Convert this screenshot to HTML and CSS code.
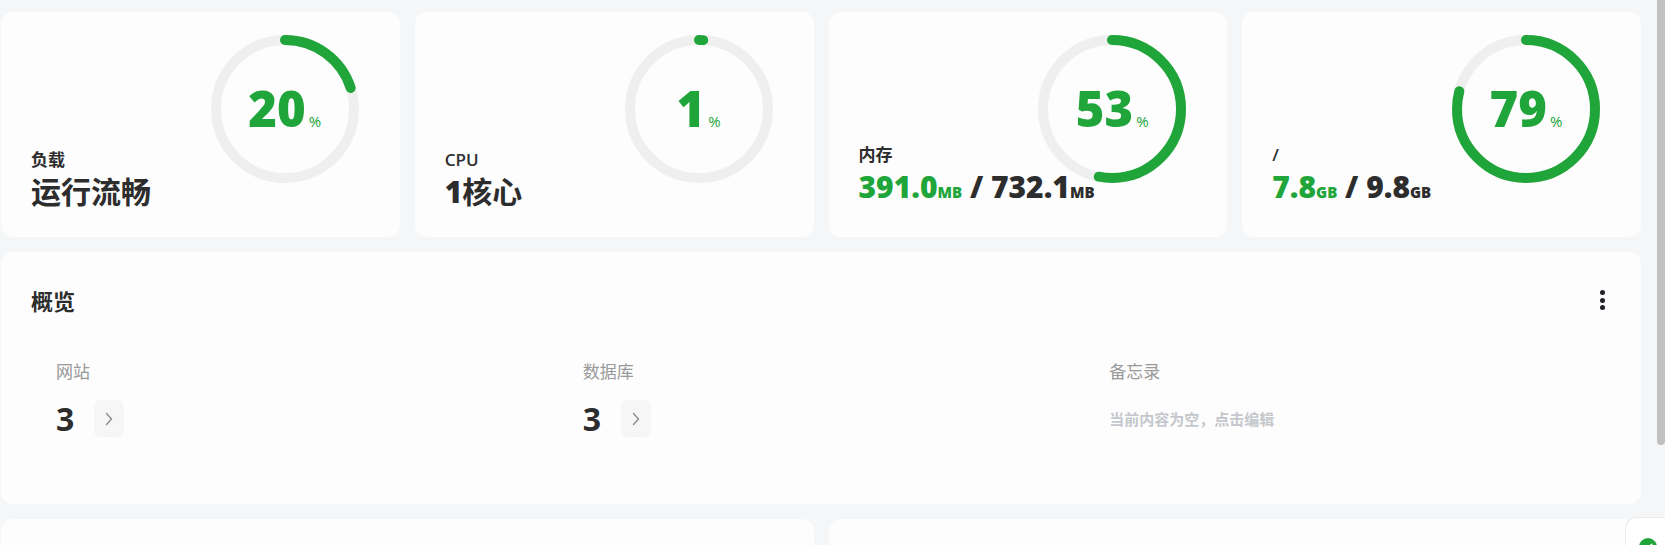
FILE: index.html
```html
<!DOCTYPE html>
<html lang="zh-CN">
<head>
<meta charset="utf-8">
<title>首页</title>
<link rel="stylesheet" href="styles.css">
</head>
<body>
<main class="page">
  <section class="stats">
    <div class="card stat-card">
      <div class="ring">
        <svg viewBox="0 0 148 148"><circle class="track" cx="74" cy="74" r="69"/><circle class="bar" cx="74" cy="74" r="69" stroke-dasharray="86.7 433.6"/></svg>
        <div class="ring-value"><span class="ring-num">20</span><span class="ring-unit">%</span></div>
      </div>
      <div class="stat-info">
        <div class="stat-label">负载</div>
        <div class="stat-value">运行流畅</div>
      </div>
    </div>
    <div class="card stat-card">
      <div class="ring">
        <svg viewBox="0 0 148 148"><circle class="track" cx="74" cy="74" r="69"/><circle class="bar" cx="74" cy="74" r="69" stroke-dasharray="4.3 433.6"/></svg>
        <div class="ring-value"><span class="ring-num">1</span><span class="ring-unit">%</span></div>
      </div>
      <div class="stat-info">
        <div class="stat-label">CPU</div>
        <div class="stat-value"><span class="num">1</span>核心</div>
      </div>
    </div>
    <div class="card stat-card">
      <div class="ring">
        <svg viewBox="0 0 148 148"><circle class="track" cx="74" cy="74" r="69"/><circle class="bar" cx="74" cy="74" r="69" stroke-dasharray="229.8 433.6"/></svg>
        <div class="ring-value"><span class="ring-num">53</span><span class="ring-unit">%</span></div>
      </div>
      <div class="stat-info">
        <div class="stat-label">内存</div>
        <div class="stat-value num"><span class="green">391.0<span class="unit">MB</span></span> / 732.1<span class="unit">MB</span></div>
      </div>
    </div>
    <div class="card stat-card">
      <div class="ring">
        <svg viewBox="0 0 148 148"><circle class="track" cx="74" cy="74" r="69"/><circle class="bar" cx="74" cy="74" r="69" stroke-dasharray="342.5 433.6"/></svg>
        <div class="ring-value"><span class="ring-num">79</span><span class="ring-unit">%</span></div>
      </div>
      <div class="stat-info">
        <div class="stat-label">/</div>
        <div class="stat-value num"><span class="green">7.8<span class="unit">GB</span></span> / 9.8<span class="unit">GB</span></div>
      </div>
    </div>
  </section>

  <section class="card overview">
    <div class="ov-head">
      <h2 class="ov-title">概览</h2>
      <div class="more"><i></i><i></i><i></i></div>
    </div>
    <div class="ov-grid">
      <div class="ov-item">
        <div class="ov-label">网站</div>
        <div class="ov-row">
          <span class="ov-num">3</span>
          <span class="go"><svg viewBox="0 0 8 14" width="8" height="14"><path d="M1.5 1.5 L6.5 7 L1.5 12.5" fill="none" stroke="#8c8c8c" stroke-width="1.4" stroke-linecap="round" stroke-linejoin="round"/></svg></span>
        </div>
      </div>
      <div class="ov-item">
        <div class="ov-label">数据库</div>
        <div class="ov-row">
          <span class="ov-num">3</span>
          <span class="go"><svg viewBox="0 0 8 14" width="8" height="14"><path d="M1.5 1.5 L6.5 7 L1.5 12.5" fill="none" stroke="#8c8c8c" stroke-width="1.4" stroke-linecap="round" stroke-linejoin="round"/></svg></span>
        </div>
      </div>
      <div class="ov-item">
        <div class="ov-label">备忘录</div>
        <div class="ov-row">
          <span class="memo">当前内容为空，点击编辑</span>
        </div>
      </div>
    </div>
  </section>

  <section class="bottom-row">
    <div class="card lower"></div>
    <div class="card lower"></div>
  </section>
</main>

<div class="scroll-thumb"></div>
<div class="float-widget">
  <span class="float-icon"><svg viewBox="0 0 18 18" width="18" height="18"><circle cx="9" cy="9" r="9" fill="#20a53a"/><path d="M5.5 9.5 L8 12 L12.5 6.5" fill="none" stroke="#fff" stroke-width="1.8" stroke-linecap="round" stroke-linejoin="round"/></svg></span>
</div>
</body>
</html>
```

FILE: styles.css
```css
* {
  box-sizing: border-box;
  margin: 0;
  padding: 0;
}

html, body {
  height: 100%;
  overflow: hidden;
}

body {
  background: #f5f6f7;
  font-family: "Open Sans", "Noto Sans CJK SC", sans-serif;
  color: #2d2d2d;
}

.page {
  width: 1657px;
  padding: 12px 16px 0 1px;
  display: flex;
  flex-direction: column;
  gap: 15px;
}

.card {
  background: #fdfdfd;
  border-radius: 12px;
}

.stats {
  display: grid;
  grid-template-columns: repeat(4, 1fr);
  gap: 15px;
}

.stat-card {
  height: 225px;
  display: grid;
  padding: 23px 41px 27px 30px;
}

.stat-card > * {
  grid-area: 1 / 1;
}

.stat-info {
  align-self: end;
}

.stat-label {
  font-size: 17px;
  font-weight: 600;
  line-height: 22px;
  margin-bottom: 3px;
  color: #2d2d2d;
}

.stat-value {
  font-size: 30px;
  font-weight: 700;
  line-height: 36px;
  white-space: nowrap;
  color: #2d2d2d;
}

.num {
  font-weight: 800;
}

.stat-value .unit {
  font-size: 15px;
}

.green {
  color: #20a53a;
}

.ring {
  justify-self: end;
  align-self: start;
  width: 148px;
  height: 148px;
  display: grid;
}

.ring > * {
  grid-area: 1 / 1;
}

.ring svg {
  width: 148px;
  height: 148px;
  display: block;
}

.ring .track {
  fill: none;
  stroke: #efefef;
  stroke-width: 10;
}

.ring .bar {
  fill: none;
  stroke: #20a53a;
  stroke-width: 10;
  stroke-linecap: round;
  transform: rotate(-90deg);
  transform-origin: 74px 74px;
}

.ring-value {
  align-self: center;
  justify-self: center;
  display: flex;
  align-items: baseline;
  color: #20a53a;
  line-height: 1;
  margin-top: -2px;
}

.ring-num {
  font-size: 49px;
  font-weight: 800;
}

.ring-unit {
  font-size: 15px;
  margin-left: 3px;
}

.overview {
  height: 252px;
  padding: 30px;
}

.ov-head {
  height: 36px;
  display: flex;
  align-items: center;
  justify-content: space-between;
}

.ov-title {
  font-size: 22px;
  font-weight: 700;
  color: #2d2d2d;
}

.more {
  width: 18px;
  display: flex;
  flex-direction: column;
  align-items: center;
  gap: 2.5px;
}

.more i {
  width: 5px;
  height: 5px;
  border-radius: 50%;
  background: #1f2329;
}

.ov-grid {
  display: grid;
  grid-template-columns: repeat(3, 1fr);
  margin-top: 42px;
}

.ov-item {
  padding-left: 25px;
}

.ov-label {
  font-size: 17px;
  line-height: 24px;
  color: #999;
}

.ov-row {
  margin-top: 16px;
  height: 37px;
  display: flex;
  align-items: center;
}

.ov-num {
  font-size: 32px;
  font-weight: 700;
  line-height: 37px;
  color: #2d2d2d;
}

.go {
  margin-left: 20px;
  width: 30px;
  height: 37px;
  border-radius: 6px;
  background: #f6f6f7;
  display: flex;
  align-items: center;
  justify-content: center;
}

.memo {
  font-size: 15px;
  font-weight: 600;
  color: #c4c7cc;
}

.bottom-row {
  display: grid;
  grid-template-columns: 1fr 1fr;
  gap: 15px;
}

.lower {
  height: 26px;
  border-radius: 12px 12px 0 0;
}

.scroll-thumb {
  position: fixed;
  top: 0;
  right: 0;
  width: 8px;
  height: 445px;
  background: #c1c1c1;
  border-radius: 0 0 4px 4px;
}

.float-widget {
  position: fixed;
  left: 1625px;
  top: 517px;
  width: 40px;
  height: 28px;
  background: #fff;
  border: 1px solid #ebebeb;
  border-bottom: 0;
  border-right: 0;
  border-radius: 12px 0 0 0;
  padding: 20px 0 0 13px;
  overflow: hidden;
}

.float-icon {
  display: block;
  width: 18px;
  height: 18px;
}

.float-icon svg {
  display: block;
}
```
